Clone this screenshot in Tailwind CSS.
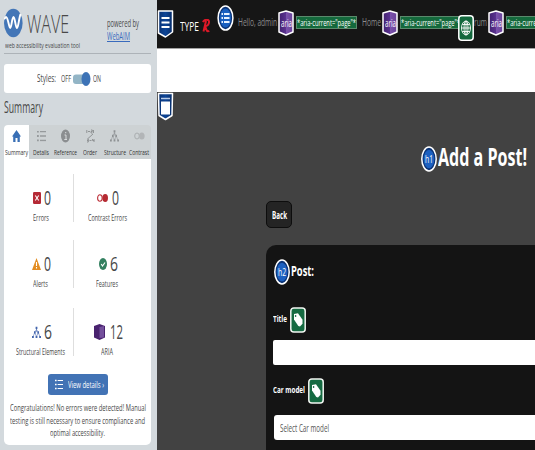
<!DOCTYPE html>
<html lang="en">
<head>
<meta charset="utf-8">
<title>Add a Post</title>
<script src="https://cdn.jsdelivr.net/npm/@tailwindcss/browser@4"></script>
</head>
<body class="w-[535px] h-[450px] overflow-hidden font-['Open_Sans','Noto_Sans',sans-serif] bg-[#424242] flex">
<svg class="absolute w-0 h-0">
  <defs>
    <linearGradient id="gb" x2="1" y2="0"><stop stop-color="#0a3374"/><stop offset=".5" stop-color="#0d4596"/><stop offset="1" stop-color="#082d68"/></linearGradient>
    <linearGradient id="gp"><stop stop-color="#42216f"/><stop offset=".5" stop-color="#5a3290"/><stop offset=".52" stop-color="#7a52ab"/><stop offset="1" stop-color="#6a4299"/></linearGradient>
    <symbol id="list" viewBox="0 0 10 12"><g fill="currentColor"><path d="M0 0h2v2H0zM0 5h2v2H0zM0 10h2v2H0zM3.3 .3H10v1.400H3.3zM3.3 5.3H10v1.400H3.3zM3.3 10.3H10v1.400H3.3z"/></g></symbol>
    <symbol id="tree" viewBox="0 0 10 13"><path d="M5 2v4M3 6.500L5 3l2 3.500M1.300 11L3 6.500 5 11l2-4.500L8.700 11" fill="none" stroke="currentColor" stroke-width=".6"/><path d="M4 0h2v2.500H4zM2.200 5h1.800v2.500H2.200zM6 5h1.800v2.500H6zM0 10.300h2v2.400H0zM4 10.300h2v2.400H4zM8 10.300h2v2.400H8z" fill="currentColor"/></symbol>
    <symbol id="shield" viewBox="0 0 16 26"><path d="M1 3L8 1l7 2v19l-7 3-7-3z" fill="url(#gp)" stroke="#fff" stroke-width="1.500" stroke-linejoin="round"/></symbol>
    <symbol id="tag" viewBox="0 0 16 26"><rect x=".8" y=".9" width="14.400" height="24.200" rx="3" fill="#156a41" stroke="#f2f6f2" stroke-width="1.500"/><path d="M4 7l4-.7 4.500 6.500v4L10 19.500 8.300 19 4 12.500z" fill="#fff"/><ellipse cx="5.600" cy="9" rx=".8" ry="1.100" fill="#156a41"/></symbol>
    <symbol id="disc" viewBox="0 0 16 26"><ellipse cx="8" cy="13" rx="7.200" ry="12" fill="#0b3477" stroke="#fff" stroke-width="1.500"/><ellipse cx="8" cy="13" rx="5.300" ry="9.300" fill="#1c60c0"/></symbol>
  </defs>
</svg>

<aside class="w-[157px] h-[450px] shrink-0 bg-[#d3d9dd] pl-1 pr-[6px] text-[#484848]">
  <header class="h-[54px] border-b border-[#adb3b8] flex">
    <div class="w-[103px] pt-[7px]">
      <div class="flex items-center h-[32px]">
        <svg class="w-[19px] h-[30px] shrink-0" viewBox="0 0 19 30"><ellipse cx="9.300" cy="15" rx="9.300" ry="14.300" fill="#4376b7"/><path d="M0 11l2-2c2 0 3 11 4.200 11C7.500 20 8 9 9.500 9s2 11 3.500 11c1.400 0 2-11 3.700-14" fill="none" stroke="#fff" stroke-width="1.900" stroke-linejoin="round"/></svg>
        <span data-w="42" class="ml-1 text-[26px] leading-8 font-light text-[#484848]">WAVE</span>
      </div>
      <div class="h-3 flex items-center pl-px"><span data-w="75" class="text-[8px] leading-3">web accessibility evaluation tool</span></div>
    </div>
    <div class="pt-[17px] text-[10px] leading-[12.500px]">
      <div class="h-[12.5px]"><span data-w="32">powered by</span></div>
      <div class="h-[12.5px]"><span data-w="23" class="text-[#396bbd] underline">WebAIM</span></div>
    </div>
  </header>

  <section class="mt-[10px] h-[29px] w-[147px] rounded-[3px] bg-white flex items-center pl-[33px] pt-px">
    <span data-w="19" class="text-[10.500px]">Styles:</span>
    <span data-w="10" class="ml-[5px] text-[9px]">OFF</span>
    <svg class="ml-[2px] w-[18px] h-4" viewBox="0 0 18 16"><rect y="3.500" width="15" height="9.500" rx="3" fill="#93b5c6"/><ellipse cx="13" cy="8" rx="4.500" ry="7" fill="#3d73b6"/></svg>
    <span data-w="8" class="ml-[2px] text-[9px]">ON</span>
  </section>

  <h1 class="h-[32px] flex items-center"><span data-w="39" class="text-[15.500px] mt-[-2px]">Summary</span></h1>

  <nav class="w-[147px] h-[34px] rounded-t-[4px] overflow-hidden bg-[#cdd2d4] flex text-[8px] leading-[12px] text-[#333]">
    <div class="w-[25px] bg-white flex flex-col items-center pt-[4px]">
      <svg class="w-[9px] h-[14px]" viewBox="0 0 9 14"><path d="M4.500 1L9 7.500H7.800V13H5.500V9h-2v4H1.200V7.500H0z" fill="#396fb5"/></svg>
      <span data-w="23" class="mt-[3px]">Summary</span>
    </div>
    <div class="w-[24px] flex flex-col items-center pt-[4px]"><svg class="w-[9px] h-[14px] text-[#969a9c] py-[1.5px]"><use href="#list"/></svg><span data-w="16" class="mt-[3px]">Details</span></div>
    <div class="w-[25px] flex flex-col items-center pt-[4px]"><svg class="w-[9px] h-[14px]" viewBox="0 0 9 14"><ellipse cx="4.500" cy="7" rx="4.500" ry="6.500" fill="#8b8e90"/><path d="M3.500 6H5v4.500M3.300 10.500h2.700M4 3.700h1.300" fill="none" stroke="#d8dbdc" stroke-width="1"/></svg><span data-w="23" class="mt-[3px]">Reference</span></div>
    <div class="w-[24px] flex flex-col items-center pt-[4px]"><svg class="w-[9px] h-[14px]" viewBox="0 0 9 14" stroke="#8a8d8f" fill="none" stroke-width=".9"><path d="M.8 1v3M2 2.500h2M5 1h1.300v1.500H5V4h1.500M7.500 1v3M7 5L2 9.500M1 10h1.300v3H1M1 11.500h1.300M3.500 11.500h2M6.500 10v1.500h1.700M8 10v3"/></svg><span data-w="14" class="mt-[3px]">Order</span></div>
    <div class="w-[25px] flex flex-col items-center pt-[4px]"><svg class="w-[9px] h-[14px] text-[#8e9294]"><use href="#tree"/></svg><span data-w="22" class="mt-[3px]">Structure</span></div>
    <div class="w-[24px] flex flex-col items-center pt-[4px]"><svg class="w-[11px] h-[14px]" viewBox="0 0 11 14"><ellipse cx="3" cy="7" rx="2.300" ry="3" fill="none" stroke="#a9adaf"/><ellipse cx="7.800" cy="7" rx="2.800" ry="3.600" fill="#b2b5b7"/></svg><span data-w="20" class="mt-[3px]">Contrast</span></div>
  </nav>

  <main class="w-[147px] h-[286px] rounded-b-[5px] bg-white pt-[15px]">
    <div class="grid grid-cols-[70px_77px] text-[8.500px] leading-3">
      <div class="h-[48px] border-r border-[#dedede] pt-[14px] pl-[29px]">
        <div class="h-5 flex items-center"><svg class="w-2 h-3" viewBox="0 0 8 12"><rect width="8" height="12" rx="1.200" fill="#b52a36"/><path d="M2.300 3.500l3.400 5M5.700 3.500l-3.400 5" stroke="#fff" stroke-width="1.100"/></svg><span data-w="7" class="ml-[3px] text-[20px] leading-5">0</span></div>
        <div class="mt-[4px] h-3"><span data-w="16">Errors</span></div>
      </div>
      <div class="h-[48px] pt-[14px] pl-[14px]">
        <div class="h-5 flex items-center pl-[9px]"><svg class="w-[11px] h-3" viewBox="0 0 11 12"><ellipse cx="2.900" cy="6" rx="2.300" ry="3.200" fill="none" stroke="#bd3039" stroke-width="1.100"/><ellipse cx="8.200" cy="6" rx="2.800" ry="4" fill="#b52a32"/></svg><span data-w="7" class="ml-[4px] text-[20px] leading-5">0</span></div>
        <div class="mt-[4px] h-3"><span data-w="39">Contrast Errors</span></div>
      </div>
      <div class="mt-[18px] h-[48px] border-r border-[#dedede] pt-[14px] pl-[28px]">
        <div class="h-5 flex items-center"><svg class="w-[9px] h-3" viewBox="0 0 9 12"><path d="M4.500 0L9 12H0z" fill="#e38d22"/><path d="M4.500 4v4M4.500 9v1.500" stroke="#fff" stroke-width="1.100"/></svg><span data-w="7" class="ml-[3px] text-[20px] leading-5">0</span></div>
        <div class="mt-[4px] h-3"><span data-w="15" class="ml-[1px]">Alerts</span></div>
      </div>
      <div class="mt-[18px] h-[48px] pt-[14px] pl-[22px]">
        <div class="h-5 flex items-center pl-[3px]"><svg class="w-2 h-3" viewBox="0 0 8 12"><ellipse cx="4" cy="6" rx="4" ry="6" fill="#338060"/><path d="M2.200 6l1.300 2L6 4.500" fill="none" stroke="#fff" stroke-width="1.100"/></svg><span data-w="8" class="ml-[3px] text-[20px] leading-5">6</span></div>
        <div class="mt-[4px] h-3"><span data-w="22">Features</span></div>
      </div>
      <div class="mt-[20px] h-[48px] border-r border-[#dedede] pt-[14px] pl-[12px]">
        <div class="h-5 flex items-center pl-[16px]"><svg class="w-[9px] h-[13px] text-[#4365ad]"><use href="#tree"/></svg><span data-w="8" class="ml-[3px] text-[20px] leading-5">6</span></div>
        <div class="mt-[4px] h-3"><span data-w="49">Structural Elements</span></div>
      </div>
      <div class="mt-[20px] h-[48px] pt-[14px] pl-[20px]">
        <div class="h-5 flex items-center"><svg class="w-[11px] h-4" viewBox="0 0 11 16"><path d="M0 2L5.500 0 11 2v11.500L5.500 16 0 13.500z" fill="#49226f"/><path d="M5.500 3L10 2v11.500L5.500 14z" fill="#74509c"/></svg><span data-w="13" class="ml-[5px] text-[20px] leading-5">12</span></div>
        <div class="mt-[4px] h-3"><span data-w="12" class="ml-[7px]">ARIA</span></div>
      </div>
    </div>
    <button class="mt-[18px] ml-[44px] w-[60px] h-[21px] rounded-[3px] bg-[#4273b5] text-white flex items-center pl-[7px]">
      <svg class="w-[8px] h-[11px]"><use href="#list"/></svg><span data-w="36" class="ml-[5px] text-[9px] leading-4">View details ›</span>
    </button>
    <div class="mt-[7px] flex flex-col items-center text-[9.500px] leading-[12.600px]">
      <span data-w="136">Congratulations! No errors were detected! Manual</span>
      <span data-w="135">testing is still necessary to ensure compliance and</span>
      <span data-w="55">optimal accessibility.</span>
    </div>
  </main>
</aside>

<div class="w-[378px] h-[450px] overflow-hidden text-white">
  <header class="h-[48px] bg-[#161616] flex items-center overflow-hidden text-[11px] text-[#8b8b8b]">
    <svg class="w-[17px] h-[28px] shrink-0" viewBox="0 0 17 28"><path d="M1.500 1h14v21L8.500 27l-7-4z" fill="url(#gb)" stroke="#fff" stroke-width="1.500" stroke-linejoin="round"/><path d="M4.500 8h8M4.500 12.500h8M4.500 17h8" stroke="#fff" stroke-width="1.800"/></svg>
    <span data-w="19" class="ml-[6px] mt-[4px] text-[13.500px] text-white">TYPE</span>
    <svg class="ml-[3px] mt-[3px] w-[8px] h-[14px] shrink-0" viewBox="0 0 8 14"><path d="M.8 3C3-.3 7.500 0 7 3.500 6.800 5.800 5 7 2.800 7.200M4 2L1.500 12.500M3 7l1.800 4.500c.6 1.200 1.500 1 2.500.3" fill="none" stroke="#dc1827" stroke-width="2"/></svg>
    <svg class="ml-[7px] mb-[13px] w-[17px] h-[26px] shrink-0" viewBox="0 0 17 26"><ellipse cx="8.500" cy="13" rx="7.400" ry="12" fill="#0b3477" stroke="#fff" stroke-width="1.500"/><ellipse cx="8.500" cy="13" rx="5.500" ry="9.500" fill="#1a60c0"/><path d="M4.500 9h1.500M4.500 13h1.500M4.500 17h1.500M7 9h5.500M7 13h5.500M7 17h5.500" stroke="#e8f2ff" stroke-width="1.800"/></svg>
    <span data-w="39" class="ml-[4px] mb-[4px]">Hello, admin</span>
    <div class="relative ml-[1px] mb-[2px] w-4 h-[26px] shrink-0 text-white"><svg class="w-4 h-[26px]"><use href="#shield"/></svg><span data-w="11" class="absolute left-[2.5px] top-[5px] leading-4 text-[10px]">aria</span></div>
    <div class="ml-[2px] mb-[3px] w-[61px] h-[13px] shrink-0 bg-[#14693c] border border-[#5a8a6c] flex items-center text-white"><span data-w="59" class="text-[9.500px] leading-3">*aria-current="page"*</span></div>
    <span data-w="19" class="ml-[5px] mb-[4px]">Home</span>
    <div class="relative ml-[1px] mb-[2px] w-4 h-[26px] shrink-0 text-white"><svg class="w-4 h-[26px]"><use href="#shield"/></svg><span data-w="11" class="absolute left-[2.5px] top-[5px] leading-4 text-[10px]">aria</span></div>
    <div class="relative ml-[2px] mb-[3px] w-[61px] h-[13px] shrink-0 bg-[#14693c] border border-[#5a8a6c] flex items-center text-white"><span data-w="59" class="text-[9.500px] leading-3">*aria-current="page"*</span>
      <svg class="absolute left-[57px] -top-[2px] w-4 h-[26px]" viewBox="0 0 16 26"><rect x=".8" y=".8" width="14.400" height="24.400" rx="3" fill="#13683d" stroke="#fff" stroke-width="1.500"/><g fill="none" stroke="#fff" stroke-width=".9"><ellipse cx="8" cy="13" rx="4.500" ry="7"/><ellipse cx="8" cy="13" rx="2" ry="7"/><path d="M8 6v14M3.500 13h9M4.300 9.500h7.400M4.300 16.500h7.400"/></g></svg></div>
    <span data-w="13" class="ml-[13px] mb-[4px]">rum</span>
    <div class="relative ml-[1px] mb-[2px] w-4 h-[26px] shrink-0 text-white"><svg class="w-4 h-[26px]"><use href="#shield"/></svg><span data-w="11" class="absolute left-[2.5px] top-[5px] leading-4 text-[10px]">aria</span></div>
    <div class="ml-[2px] mb-[3px] w-[61px] h-[13px] shrink-0 bg-[#14693c] border border-[#5a8a6c] flex items-center text-white"><span data-w="59" class="text-[9.500px] leading-3">*aria-current="page"*</span></div>
  </header>
  <div class="h-[44px] bg-white border-t border-[#a3a3a3]"></div>
  <section class="h-[358px] bg-[#424242]">
    <svg class="w-[17px] h-[29px]" viewBox="0 0 17 29"><path d="M1.500 1.500h14L15 23.500 8.500 27.500 2 23.500z" fill="url(#gb)" stroke="#fff" stroke-width="1.500" stroke-linejoin="round"/><path d="M4 6.500h9" stroke="#b9cbe6" stroke-width="1.500"/><path d="M4 9.500h9v13H4z" fill="#fff"/></svg>
    <div class="mt-[21px] ml-[264px] h-[34px] flex items-center">
      <div class="relative mt-[-1px] w-4 h-[26px] shrink-0"><svg class="w-4 h-[26px]"><use href="#disc"/></svg><span data-w="8" class="absolute left-[4px] top-[5px] leading-4 text-[10.500px]">h1</span></div>
      <h2 data-w="89" class="ml-px mt-[-6px] text-[25px] leading-8 font-bold">Add a Post!</h2>
    </div>
    <button class="mt-[25px] ml-[109px] w-[26px] h-[27px] rounded-[5px] bg-[#242424] border border-[#0d0d0d] flex items-center pl-[5px] pt-px"><span data-w="15" class="text-[10px] leading-4 font-bold">Back</span></button>
    <form class="mt-[17px] ml-[109px] h-[220px] rounded-tl-[10px] bg-[#141414] pl-[7px]">
      <div class="pt-[14px] h-[40px] pl-px flex items-center">
        <div class="relative w-4 h-[26px] shrink-0"><svg class="w-4 h-[26px]"><use href="#disc"/></svg><span data-w="8" class="absolute left-[4px] top-[5px] leading-4 text-[10.500px]">h2</span></div>
        <h3 data-w="23" class="ml-[1px] mt-[-3px] text-[14.500px] leading-5 font-bold">Post:</h3>
      </div>
      <div class="mt-[22px] h-[26px] flex items-center"><label data-w="14" class="text-[9.500px] leading-4 mt-[-2px] font-bold">Title</label><svg class="ml-[3px] w-4 h-[26px]"><use href="#tag"/></svg></div>
      <div class="mt-[7px] h-[25px] bg-white rounded-l-[2px]"></div>
      <div class="mt-[13px] h-[26px] flex items-center"><label data-w="32" class="text-[9.500px] leading-4 mt-[-3px] font-bold">Car model</label><svg class="ml-[3px] w-4 h-[26px]"><use href="#tag"/></svg></div>
      <div class="mt-[11px] ml-px h-[25px] bg-white rounded-l-[3px] flex items-center pl-[6px]"><span data-w="49" class="text-[10.500px] leading-4 text-[#555]">Select Car model</span></div>
    </form>
  </section>
</div>
<script>
// Condenses each label horizontally to its intended width, again whenever its natural size changes.
const fit = box => {
  const natural = parseFloat(getComputedStyle(box).width);
  if (natural > 0) box.style.transform = 'scaleX(' + box.parentElement.dataset.w / natural + ')';
};
const observer = new ResizeObserver(entries => entries.forEach(e => fit(e.target)));
document.querySelectorAll('[data-w]').forEach(el => {
  const box = document.createElement('span');
  box.textContent = el.textContent;
  box.style.cssText = 'display:inline-block;white-space:nowrap;transform-origin:0 50%;text-decoration:inherit';
  el.textContent = '';
  el.appendChild(box);
  el.style.display = 'block';
  el.style.flexShrink = '0';
  el.style.width = el.dataset.w + 'px';
  fit(box);
  observer.observe(box);
});
</script>
</body>
</html>
